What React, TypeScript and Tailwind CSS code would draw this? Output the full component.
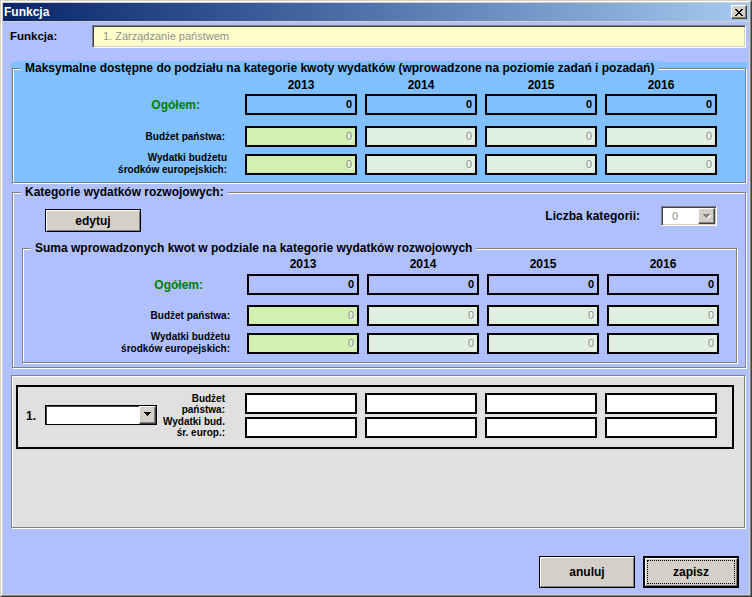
import React from 'react';

const YEARS = ['2013', '2014', '2015', '2016'];

// Windows-classic style borders
const etched = 'border border-[#808080] shadow-[inset_1px_1px_0_#fff,1px_1px_0_#fff]';
const sunken =
  'border border-t-[#808080] border-l-[#808080] border-b-white border-r-white shadow-[inset_1px_1px_0_#404040,inset_-1px_-1px_0_#d4d0c8]';
const raised =
  'border border-t-[#fff] border-l-[#fff] border-b-[#404040] border-r-[#404040] shadow-[inset_-1px_-1px_0_#808080]';

const Arrow = ({ color = '#000', shadow = false }: { color?: string; shadow?: boolean }) => (
  <svg width="8" height="5" viewBox="0 0 8 5" shapeRendering="crispEdges">
    {shadow && <path d="M1 1h7v1H1z M2 2h5v1H2z M3 3h3v1H3z M4 4h1v1H4z" fill="#fff" />}
    <path d="M0 0h7v1H0z M1 1h5v1H1z M2 2h3v1H2z M3 3h1v1H3z" fill={color} />
  </svg>
);

function Legend({ children, bg }: { children: React.ReactNode; bg: string }) {
  return (
    <span className={`absolute -top-[8px] left-[8px] px-[4px] text-[12px] leading-[14px] font-bold text-black whitespace-nowrap ${bg}`}>
      {children}
    </span>
  );
}

function Cell({ bg, value = '', strong }: { bg: string; value?: string; strong?: boolean }) {
  return (
    <div
      className={`h-[21px] border-2 border-black flex items-center justify-end pr-[3px] text-[11px] leading-none ${bg} ${
        strong ? 'font-bold text-black' : 'text-[#8c8c8c] [text-shadow:1px_1px_0_#fff]'
      }`}
    >
      {value}
    </div>
  );
}

function Amounts({ grid, bg, sub }: { grid: string; bg: string; sub?: boolean }) {
  return (
    <div>
      <div className={`${grid} h-[14px]`}>
        <div />
        {YEARS.map((y) => (
          <div key={y} className="text-center text-[12px] leading-[14px] font-bold text-black">
            {y}
          </div>
        ))}
      </div>
      <div className={`${grid} items-center ${sub ? 'mt-[3px]' : 'mt-[2px]'}`}>
        <div className={`text-right text-[12px] font-bold text-[#008000] ${sub ? 'pr-[36px]' : 'pr-[37px]'}`}>Ogółem:</div>
        {YEARS.map((y) => (
          <Cell key={y} bg={bg} value="0" strong />
        ))}
      </div>
      <div className={`${grid} items-center ${sub ? 'mt-[10px]' : 'mt-[11px]'}`}>
        <div className={`text-right text-[10px] font-bold text-black ${sub ? 'pr-[9px]' : 'pr-[12px]'}`}>Budżet państwa:</div>
        {YEARS.map((y, i) => (
          <Cell key={y} bg={i === 0 ? 'bg-[#d2f0b2]' : 'bg-[#e0f0e0]'} value="0" />
        ))}
      </div>
      <div className={`${grid} items-center mt-[5px]`}>
        <div className={`text-right text-[10px] leading-[12px] font-bold text-black ${sub ? 'pr-[9px]' : 'pr-[10px]'}`}>
          <div>Wydatki budżetu</div>
          <div>środków europejskich:</div>
        </div>
        {YEARS.map((y, i) => (
          <Cell key={y} bg={i === 0 ? 'bg-[#d2f0b2]' : 'bg-[#e0f0e0]'} value="0" />
        ))}
      </div>
    </div>
  );
}

export default function App() {
  return (
    <div className="w-[752px] h-[597px] bg-[#d4d0c8] border border-t-[#d4d0c8] border-l-[#d4d0c8] border-r-[#404040] border-b-[#404040] font-['Liberation_Sans',Arial,sans-serif]">
      <div className="h-full border border-t-white border-l-white border-r-[#808080] border-b-[#808080] p-px flex flex-col">
        {/* Title bar */}
        <div className="h-[18px] shrink-0 flex items-center justify-between bg-linear-to-r from-[#0a246a] to-[#a6caf0] pl-[1px] pr-[2px]">
          <span className="text-white font-bold text-[12px] leading-none">Funkcja</span>
          <div className={`w-[16px] h-[14px] bg-[#d4d0c8] flex items-center justify-center ${raised}`}>
            <svg width="8" height="7" viewBox="0 0 8 7" shapeRendering="crispEdges">
              <path
                d="M0 0h2v1H0z M6 0h2v1H6z M1 1h2v1H1z M5 1h2v1H5z M2 2h4v1H2z M3 3h2v1H3z M2 4h4v1H2z M1 5h2v1H1z M5 5h2v1H5z M0 6h2v1H0z M6 6h2v1H6z"
                fill="#000"
              />
            </svg>
          </div>
        </div>

        {/* Body */}
        <div className="mt-px flex-1 bg-[#b0c0ff] flex flex-col">
          {/* Funkcja */}
          <div className="mt-[3px] h-[23px] flex items-center">
            <div className="w-[89px] pl-[7px] text-[11.5px] font-bold text-black">Funkcja:</div>
            <div className={`w-[654px] h-[23px] bg-[#ffffcc] flex items-center pl-[10px] text-[11px] text-[#909090] ${sunken}`}>
              1. Zarządzanie państwem
            </div>
          </div>

          {/* Maksymalne dostępne */}
          <div className="mt-[14px] ml-[8px] w-[736px] bg-[#80c0ff] pt-[6px] px-px pb-px">
            <div className={`relative pt-[9px] pb-[6px] ${etched}`}>
              <Legend bg="bg-[#80c0ff]">
                Maksymalne dostępne do podziału na kategorie kwoty wydatków (wprowadzone na poziomie zadań i pozadań)
              </Legend>
              <Amounts grid="grid grid-cols-[224px_112px_112px_112px_112px] gap-x-2" bg="bg-[#80c0ff]" />
            </div>
          </div>

          {/* Kategorie wydatków rozwojowych */}
          <div className={`relative mt-[8px] ml-[9px] w-[734px] pt-[13px] pb-[4px] ${etched}`}>
            <Legend bg="bg-[#b0c0ff]">Kategorie wydatków rozwojowych:</Legend>
            <div className="h-[26px] flex justify-between items-start pl-[32px] pr-[28px]">
              <button className="mt-[3px] w-[96px] h-[23px] bg-[#d4d0c8] border border-black shadow-[inset_1px_1px_0_#fff,inset_-1px_-1px_0_#808080] text-[12px] font-bold text-black">
                edytuj
              </button>
              <div className="flex items-center gap-[21px] h-[20px]">
                <span className="text-[12px] font-bold text-black">Liczba kategorii:</span>
                <div className={`w-[56px] h-[20px] bg-white flex items-center justify-between pl-[10px] pr-[1px] ${sunken}`}>
                  <span className="text-[11px] text-[#8c8c8c]">0</span>
                  <div className={`w-[17px] h-[16px] bg-[#d4d0c8] flex items-center justify-center ${raised}`}>
                    <Arrow color="#808080" shadow />
                  </div>
                </div>
              </div>
            </div>

            <div className={`relative mt-[16px] ml-[9px] mr-[8px] pt-[8px] pb-[7px] ${etched}`}>
              <Legend bg="bg-[#b0c0ff]">Suma wprowadzonych kwot w podziale na kategorie wydatków rozwojowych</Legend>
              <Amounts grid="grid grid-cols-[216px_112px_112px_112px_112px] gap-x-2" bg="bg-[#b0c0ff]" sub />
            </div>
          </div>

          {/* Lista kategorii */}
          <div className={`mt-[7px] ml-[8px] w-[734px] h-[153px] bg-[#e0e0e0] pt-[9px] pl-[4px] ${etched}`}>
            <div className="w-[718px] h-[64px] border-2 border-black pt-[6px] pl-[8px]">
              <div className="h-[45px] flex items-center">
                <span className="w-[19px] text-[12px] font-bold text-black">1.</span>
                <div className="w-[112px] h-[20px] mb-[2px] bg-white border border-black shadow-[inset_1px_1px_0_#404040] flex justify-end">
                  <div className={`w-[17px] h-full bg-[#d4d0c8] flex items-center justify-center ${raised}`}>
                    <Arrow />
                  </div>
                </div>
                <div className="w-[68px] text-right text-[10px] leading-[11.5px] font-bold text-black">
                  <div>Budżet</div>
                  <div>państwa:</div>
                  <div>Wydatki bud.</div>
                  <div>śr. europ.:</div>
                </div>
                <div className="ml-[20px] grid grid-cols-[112px_112px_112px_112px] gap-x-2 gap-y-[3px]">
                  {Array.from({ length: 8 }).map((_, i) => (
                    <div key={i} className="h-[21px] border-2 border-black bg-white" />
                  ))}
                </div>
              </div>
            </div>
          </div>

          {/* Przyciski */}
          <div className="mt-[28px] flex justify-end gap-2 pr-[10px]">
            <button className="w-[96px] h-[32px] bg-[#d4d0c8] border border-black shadow-[inset_1px_1px_0_#fff,inset_-1px_-1px_0_#808080] text-[12px] font-bold text-black">
              anuluj
            </button>
            <button className="w-[96px] h-[32px] bg-[#d4d0c8] border-2 border-black shadow-[inset_1px_1px_0_#fff,inset_-1px_-1px_0_#808080] p-[2px]">
              <span className="w-full h-full flex items-center justify-center border border-dotted border-black text-[12px] font-bold text-black">
                zapisz
              </span>
            </button>
          </div>
        </div>
      </div>
    </div>
  );
}
